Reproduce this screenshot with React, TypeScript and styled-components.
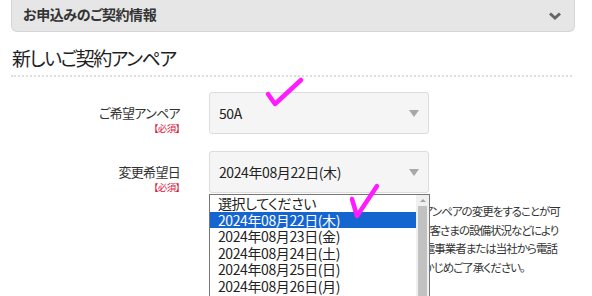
import React from "react"
import styled, { createGlobalStyle } from "styled-components"

const GlobalStyle = createGlobalStyle`
  html, body {
    margin: 0;
    padding: 0;
    background: #fff;
  }
  body {
    font-family: "Noto Sans CJK JP", "Noto Sans", sans-serif;
    font-feature-settings: "palt";
    color: #333;
    overflow: hidden;
  }
`

const Page = styled.div`
  position: relative;
  width: 592px;
  height: 296px;
  overflow: hidden;
  padding: 0 17px 0 11px;
  box-sizing: border-box;
`

const AccordionHeader = styled.div`
  display: flex;
  align-items: center;
  justify-content: space-between;
  height: 32px;
  padding: 0 12px 0 11px;
  background: #e6e6e6;
  border: 1px solid #d6d6d6;
  border-top: none;
  border-radius: 0 0 6px 6px;
  box-sizing: border-box;
`

const AccordionTitle = styled.span`
  font-size: 14px;
  font-weight: bold;
  letter-spacing: -0.4px;
  color: #333;
  line-height: 1;
  margin-top: -3px;
`

const SectionTitle = styled.h2`
  margin: 14px 3px 0 0;
  padding: 0 0 5px 1px;
  font-size: 19px;
  font-weight: normal;
  letter-spacing: -1.5px;
  line-height: 24px;
  color: #1e1e1e;
  border-bottom: 2px dotted #ddd;
`

const Form = styled.div`
  display: flex;
  flex-direction: column;
  gap: 17px;
  margin-top: 15px;
`

const Row = styled.div`
  display: grid;
  grid-template-columns: 169px 220px 1fr;
  column-gap: 29px;
`

const Label = styled.div`
  display: flex;
  flex-direction: column;
  align-items: flex-end;
  padding-top: 12px;
`

const LabelText = styled.span`
  font-size: 13px;
  line-height: 18px;
  letter-spacing: -0.7px;
  color: #333;
`

const Required = styled.span`
  font-size: 9.5px;
  line-height: 12px;
  color: #d7173c;
  letter-spacing: -0.5px;
`

const Field = styled.div`
  position: relative;
  grid-column: 2 / 4;
`

const SelectBox = styled.div`
  position: relative;
  display: flex;
  align-items: center;
  width: 220px;
  height: 42px;
  padding-left: 9px;
  box-sizing: border-box;
  background: #f5f5f5;
  border: 1px solid #dcdcdc;
  border-radius: 3px;
  font-size: 14px;
  letter-spacing: -0.4px;
  color: #222;
  &::after {
    content: "";
    position: absolute;
    right: 9px;
    top: 17px;
    border-left: 5px solid transparent;
    border-right: 5px solid transparent;
    border-top: 7px solid #a8a8a8;
  }
`

const Note = styled.p`
  margin: 9px 0 0 0;
  font-size: 11.5px;
  letter-spacing: -1px;
  line-height: 18.5px;
  color: #333;
  white-space: nowrap;
`

const ListBox = styled.div`
  position: absolute;
  left: -1px;
  top: 42px;
  width: 221px;
  height: 120px;
  display: flex;
  background: #fff;
  border: 1px solid #767676;
  box-sizing: border-box;
  z-index: 2;
`

const Options = styled.div`
  flex: 1;
  display: flex;
  flex-direction: column;
`

const Option = styled.div<{ $selected?: boolean }>`
  height: 16.6px;
  line-height: 16.6px;
  padding-left: 8px;
  font-size: 14px;
  letter-spacing: -0.4px;
  white-space: nowrap;
  color: ${(p) => (p.$selected ? "#fff" : "#222")};
  background: ${(p) => (p.$selected ? "#1565d0" : "transparent")};
`

const Scrollbar = styled.div`
  width: 13px;
  display: flex;
  flex-direction: column;
  background: #f0f0f0;
`

const ScrollArrow = styled.div`
  height: 11px;
  display: flex;
  align-items: center;
  justify-content: center;
  &::before {
    content: "";
    border-left: 3px solid transparent;
    border-right: 3px solid transparent;
    border-bottom: 3px solid #a3a3a3;
  }
`

const ScrollThumb = styled.div`
  flex: 1;
  margin: 0 2px;
  background: #c1c1c1;
`

const Marks = styled.svg`
  position: absolute;
  left: 0;
  top: 0;
  pointer-events: none;
  z-index: 5;
`

const dates = [
  "2024年08月22日(木)",
  "2024年08月23日(金)",
  "2024年08月24日(土)",
  "2024年08月25日(日)",
  "2024年08月26日(月)",
  "2024年08月27日(火)",
]

export default function App() {
  return (
    <>
      <GlobalStyle />
      <Page>
        <AccordionHeader>
          <AccordionTitle>お申込みのご契約情報</AccordionTitle>
          <svg width="14" height="10" viewBox="0 0 14 10">
            <path d="M2 2.5 L7 7 L12 2.5" fill="none" stroke="#666" strokeWidth="3" />
          </svg>
        </AccordionHeader>

        <SectionTitle>新しいご契約アンペア</SectionTitle>

        <Form>
          <Row>
            <Label>
              <LabelText>ご希望アンペア</LabelText>
              <Required>【必須】</Required>
            </Label>
            <Field>
              <SelectBox>50A</SelectBox>
            </Field>
          </Row>
          <Row>
            <Label>
              <LabelText>変更希望日</LabelText>
              <Required>【必須】</Required>
            </Label>
            <Field>
              <SelectBox>
                2024年08月22日(木)
                <ListBox>
                  <Options>
                    <Option>選択してください</Option>
                    {dates.map((d, i) => (
                      <Option key={d} $selected={i === 0}>
                        {d}
                      </Option>
                    ))}
                  </Options>
                  <Scrollbar>
                    <ScrollArrow />
                    <ScrollThumb />
                  </Scrollbar>
                </ListBox>
              </SelectBox>
              <Note>
                ※お申込みの内容によりましては、ご希望の日にアンペアの変更をすることが可
                <br />
                能な場合でも、お申込み後の工事等の諸状況やお客さまの設備状況などにより
                <br />
                日程を再調整させていただく場合があるため、送電事業者または当社から電話
                <br />
                でご連絡をさせていただくことがございます。あらかじめご了承ください。
              </Note>
            </Field>
          </Row>
        </Form>

        <Marks width="592" height="296" viewBox="0 0 592 296">
          <path
            d="M268 94 L275 104 L301 80"
            fill="none"
            stroke="#ff1aff"
            strokeWidth="4.5"
            strokeLinecap="round"
            strokeLinejoin="round"
          />
          <path
            d="M352 199 L357 216 L377 186"
            fill="none"
            stroke="#ff1aff"
            strokeWidth="4.5"
            strokeLinecap="round"
            strokeLinejoin="round"
          />
        </Marks>
      </Page>
    </>
  )
}
